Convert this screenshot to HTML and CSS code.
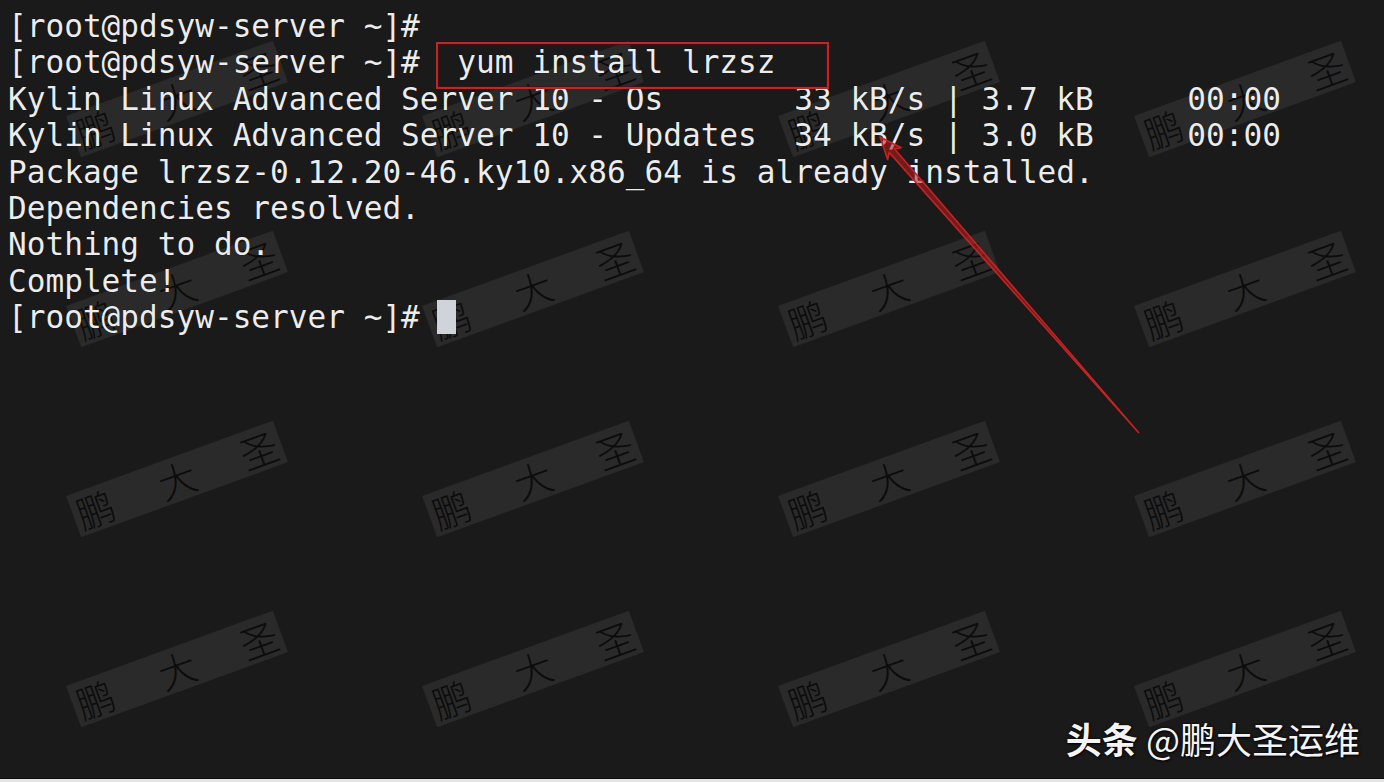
FILE: index.html
```html
<!DOCTYPE html>
<html lang="zh-CN">
<head>
<meta charset="utf-8">
<title>yum install lrzsz</title>
<link rel="stylesheet" href="styles.css">
</head>
<body>
<div class="screen">
  <div class="watermarks" aria-hidden="true">
    <div class="wm"><span>鹏</span><span>大</span><span>圣</span></div>
    <div class="wm"><span>鹏</span><span>大</span><span>圣</span></div>
    <div class="wm"><span>鹏</span><span>大</span><span>圣</span></div>
    <div class="wm"><span>鹏</span><span>大</span><span>圣</span></div>
    <div class="wm"><span>鹏</span><span>大</span><span>圣</span></div>
    <div class="wm"><span>鹏</span><span>大</span><span>圣</span></div>
    <div class="wm"><span>鹏</span><span>大</span><span>圣</span></div>
    <div class="wm"><span>鹏</span><span>大</span><span>圣</span></div>
    <div class="wm"><span>鹏</span><span>大</span><span>圣</span></div>
    <div class="wm"><span>鹏</span><span>大</span><span>圣</span></div>
    <div class="wm"><span>鹏</span><span>大</span><span>圣</span></div>
    <div class="wm"><span>鹏</span><span>大</span><span>圣</span></div>
    <div class="wm"><span>鹏</span><span>大</span><span>圣</span></div>
    <div class="wm"><span>鹏</span><span>大</span><span>圣</span></div>
    <div class="wm"><span>鹏</span><span>大</span><span>圣</span></div>
    <div class="wm"><span>鹏</span><span>大</span><span>圣</span></div>
  </div>

  <div class="terminal">
    <div class="line">[root@pdsyw-server ~]#</div>
    <div class="line">[root@pdsyw-server ~]#  <span class="boxed">yum install lrzsz</span></div>
    <div class="line">Kylin Linux Advanced Server 10 - Os       33 kB/s | 3.7 kB     00:00</div>
    <div class="line">Kylin Linux Advanced Server 10 - Updates  34 kB/s | 3.0 kB     00:00</div>
    <div class="line">Package lrzsz-0.12.20-46.ky10.x86_64 is already installed.</div>
    <div class="line">Dependencies resolved.</div>
    <div class="line">Nothing to do.</div>
    <div class="line">Complete!</div>
    <div class="line">[root@pdsyw-server ~]# <span class="cursor"></span></div>
  </div>

  <svg class="arrow" width="1384" height="779" viewBox="0 0 1384 779" aria-hidden="true">
    <polygon points="880,137 901.3,147.7 894.4,148.8 1138.5,432.5 889.2,152.4 887.7,159.5"
             fill="rgba(190,30,30,0.55)" stroke="#c42323" stroke-width="1.6" stroke-linejoin="round"/>
  </svg>

  <div class="credit"><b>头条</b> @鹏大圣运维</div>
</div>
</body>
</html>
```

FILE: styles.css
```css
html, body {
  margin: 0;
  padding: 0;
  background: #e4e4e2;
}

.screen {
  position: relative;
  width: 1384px;
  height: 779px;
  background: #1a1a1a;
  overflow: hidden;
  border-bottom: 1px solid #0c0c0c;
  box-sizing: border-box;
}

/* watermark layer */
.watermarks {
  position: absolute;
  top: 4px;
  left: -1px;
  display: grid;
  grid-template-columns: repeat(4, 356px);
  grid-template-rows: repeat(4, 190px);
  place-items: center;
  z-index: 0;
}

.wm {
  width: 220px;
  height: 44px;
  box-sizing: border-box;
  padding: 0 4px;
  display: flex;
  justify-content: space-between;
  align-items: center;
  background: rgba(255, 255, 255, 0.07);
  box-shadow: 0 0 6px rgba(255, 255, 255, 0.02);
  transform: rotate(-20deg);
  font-family: "Noto Sans CJK SC", sans-serif;
  font-weight: 300;
  font-size: 38px;
  line-height: 1;
  color: #0c0c0c;
}

/* terminal text */
.terminal {
  position: relative;
  z-index: 1;
  padding: 8px 0 0 8px;
  font-family: "DejaVu Sans Mono", "Liberation Mono", monospace;
  font-size: 31.1px;
  line-height: 36.4px;
  color: #ececec;
  text-shadow: 0 0 1px rgba(0, 0, 0, 0.9);
}

.line {
  height: 36.4px;
  white-space: pre;
}

.boxed {
  position: relative;
}

.boxed::after {
  content: "";
  position: absolute;
  top: -2px;
  bottom: -9px;
  left: -21px;
  right: -53px;
  border: 2px solid #b72a2c;
  box-shadow: inset 0 0 0 1px rgba(90, 10, 10, 0.6);
}

.cursor {
  display: inline-block;
  width: 19px;
  height: 34px;
  vertical-align: top;
  margin-top: 1px;
  margin-left: -2px;
  background: #cfd3da;
}

.arrow {
  position: absolute;
  top: 0;
  left: 0;
  z-index: 2;
  pointer-events: none;
}

.credit {
  position: absolute;
  right: 24px;
  bottom: 19px;
  z-index: 3;
  font-family: "Noto Sans CJK SC", sans-serif;
  font-size: 36px;
  line-height: 42px;
  color: #f4f4f4;
  text-shadow: 1px 1px 2px rgba(0, 0, 0, 0.9), 0 0 3px rgba(0, 0, 0, 0.8);
  white-space: nowrap;
}

.credit b {
  font-weight: 700;
}
```
